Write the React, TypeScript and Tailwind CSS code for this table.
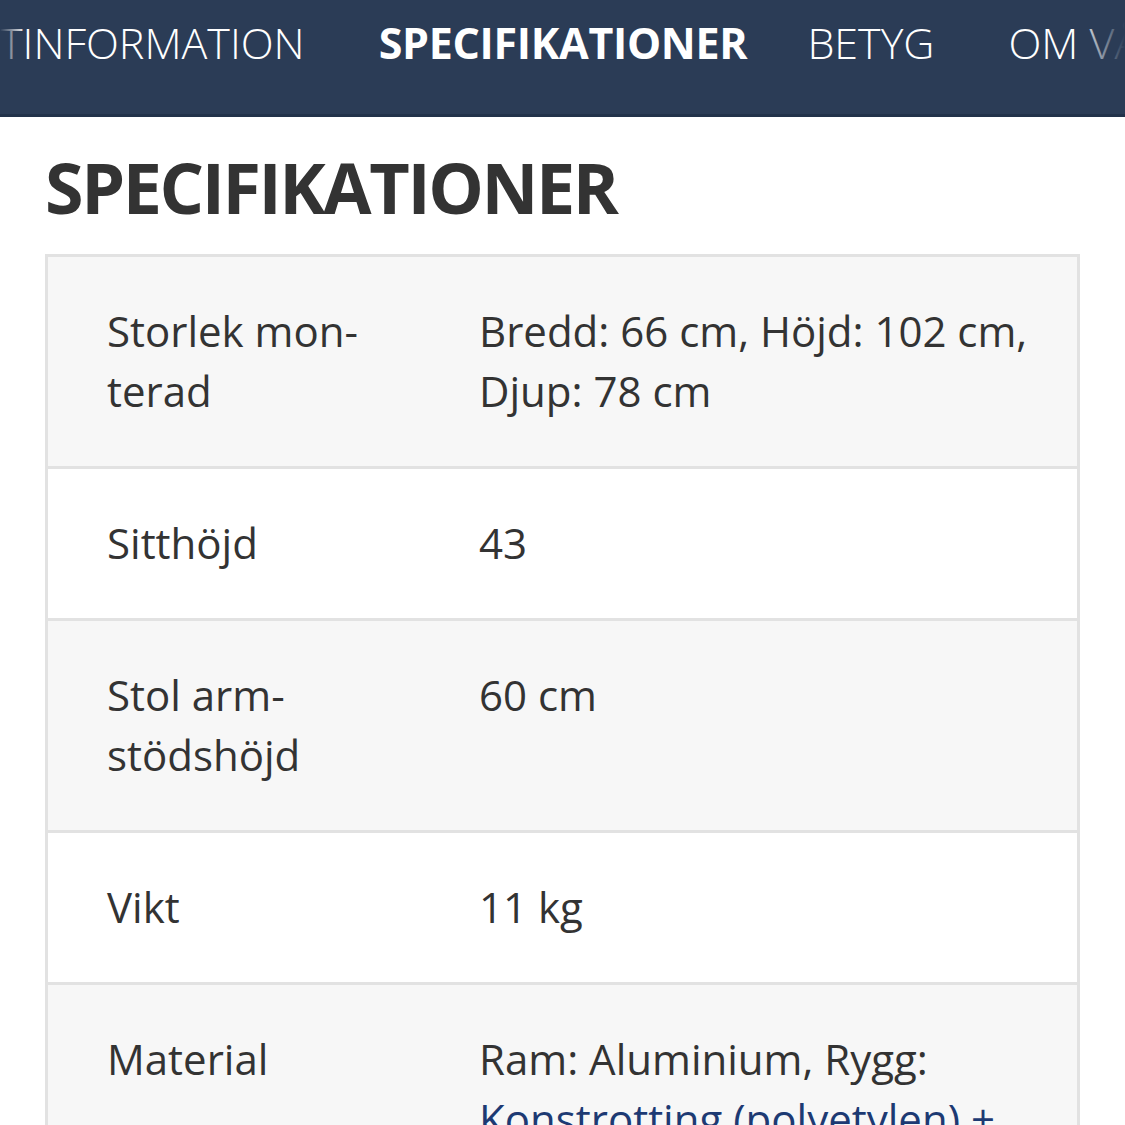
const rows: { label: string; value: React.ReactNode }[] = [
  { label: 'Storlek mon\u00ADterad', value: 'Bredd: 66 cm, Höjd: 102 cm, Djup: 78 cm' },
  { label: 'Sitthöjd', value: '43' },
  { label: 'Stol arm\u00ADstödshöjd', value: '60 cm' },
  { label: 'Vikt', value: '11 kg' },
  {
    label: 'Material',
    value: (
      <>
        Ram: Aluminium, Rygg: <span className="text-[#1d3a73]">Konstrotting (polyetylen) +</span>
      </>
    ),
  },
];

export default function App() {
  return (
    <div className="min-h-[1125px] bg-white font-['Open_Sans',sans-serif] text-[#333]">
      <nav className="relative h-[117px] overflow-hidden border-b-[3px] border-[#22324a] bg-[#2b3c56]">
        <div className="flex items-start whitespace-nowrap pt-[17px] text-[43px] leading-[52px] text-white">
          <span className="font-light">TINFORMATION</span>
          <span className="ml-[74px] font-bold tracking-[-0.3px]">SPECIFIKATIONER</span>
          <span className="ml-[60px] font-light">BETYG</span>
          <span className="ml-[74px] font-light">OM VÅRA STOLAR</span>
        </div>
        <div className="pointer-events-none absolute inset-y-0 left-0 w-[26px] bg-gradient-to-r from-[#2b3c56] to-transparent" />
        <div className="pointer-events-none absolute inset-y-0 right-0 w-[50px] bg-gradient-to-l from-[#2b3c56] to-transparent" />
      </nav>

      <main className="px-[45px]">
        <h1 className="mt-[30px] text-[70px] font-bold leading-[80px] tracking-[-2.4px] text-[#333]">
          SPECIFIKATIONER
        </h1>

        <div className="mt-[27px] border-x-[3px] border-t-[3px] border-[#e2e2e2]">
          {rows.map((row, i) => (
            <div
              key={row.label}
              className={`flex border-b-[3px] border-[#e2e2e2] pt-[44px] pb-[45px] text-[42px] leading-[60px] ${
                i % 2 === 0 ? 'bg-[#f7f7f7]' : 'bg-white'
              }`}
            >
              <div className="w-[431px] shrink-0 pl-[59px] pr-[90px] hyphens-manual">{row.label}</div>
              <div className="pr-[30px]">{row.value}</div>
            </div>
          ))}
        </div>
      </main>
    </div>
  );
}
